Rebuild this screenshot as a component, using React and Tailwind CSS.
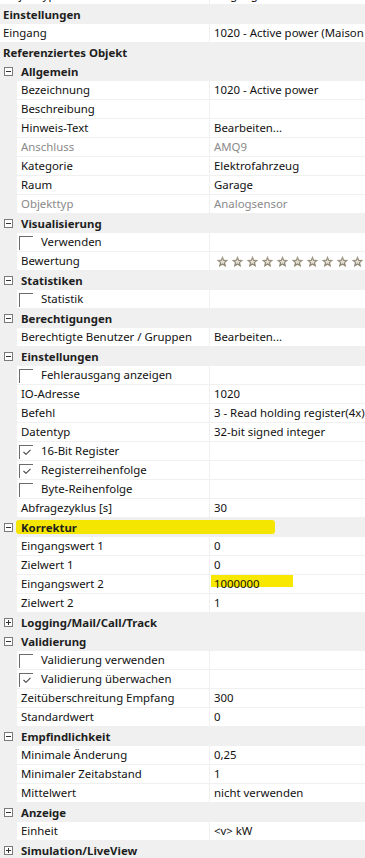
import React from "react";

const H = (label, extra = {}) => ({ kind: "header", label, ...extra });
const G = (label, open = true, extra = {}) => ({ kind: "group", label, open, ...extra });
const R = (label, value = "", extra = {}) => ({ kind: "row", label, value, indent: true, ...extra });
const C = (label, checked = false) => ({ kind: "check", label, checked });

const rows = [
  { kind: "row", label: "Objekttyp", value: "Eingang", indent: false, partial: true },
  H("Einstellungen"),
  { kind: "row", label: "Eingang", value: "1020 - Active power (Maison de l'énergie)", indent: false },
  H("Referenziertes Objekt"),
  G("Allgemein"),
  R("Bezeichnung", "1020 - Active power"),
  R("Beschreibung"),
  R("Hinweis-Text", "Bearbeiten..."),
  R("Anschluss", "AMQ9", { disabled: true }),
  R("Kategorie", "Elektrofahrzeug"),
  R("Raum", "Garage"),
  R("Objekttyp", "Analogsensor", { disabled: true }),
  G("Visualisierung"),
  C("Verwenden"),
  R("Bewertung", "", { stars: true }),
  G("Statistiken"),
  C("Statistik"),
  G("Berechtigungen"),
  R("Berechtigte Benutzer / Gruppen", "Bearbeiten..."),
  G("Einstellungen"),
  C("Fehlerausgang anzeigen"),
  R("IO-Adresse", "1020"),
  R("Befehl", "3 - Read holding register(4x)"),
  R("Datentyp", "32-bit signed integer"),
  C("16-Bit Register", true),
  C("Registerreihenfolge", true),
  C("Byte-Reihenfolge"),
  R("Abfragezyklus [s]", "30"),
  G("Korrektur", true, { mark: true }),
  R("Eingangswert 1", "0"),
  R("Zielwert 1", "0"),
  R("Eingangswert 2", "1000000", { mark: true }),
  R("Zielwert 2", "1"),
  G("Logging/Mail/Call/Track", false),
  G("Validierung"),
  C("Validierung verwenden"),
  C("Validierung überwachen", true),
  R("Zeitüberschreitung Empfang", "300"),
  R("Standardwert", "0"),
  G("Empfindlichkeit"),
  R("Minimale Änderung", "0,25"),
  R("Minimaler Zeitabstand", "1"),
  R("Mittelwert", "nicht verwenden"),
  G("Anzeige"),
  R("Einheit", "<v> kW"),
  G("Simulation/LiveView", false),
];

function Toggle({ open }) {
  return (
    <span className="relative w-[9px] h-[9px] border border-[#7a7a7a] bg-white flex items-center justify-center">
      <span className="w-[5px] h-px bg-[#333]" />
      {!open && <span className="absolute w-px h-[5px] bg-[#333]" />}
    </span>
  );
}

function Star() {
  return (
    <svg width="13" height="13" viewBox="0 0 24 24">
      <defs>
        <linearGradient id="sg" x1="0" y1="0" x2="0" y2="1">
          <stop offset="0" stopColor="#aaa392" />
          <stop offset="1" stopColor="#847b66" />
        </linearGradient>
      </defs>
      <polygon
        points="12,1.5 15,8.8 22.8,9.3 16.8,14.3 18.7,22 12,17.8 5.3,22 7.2,14.3 1.2,9.3 9,8.8"
        fill="url(#sg)"
      />
      <polygon points="12,8 13.6,11.2 17,11.5 14.4,13.7 15.2,17 12,15.2 8.8,17 9.6,13.7 7,11.5 10.4,11.2" fill="#e6e1d6" />
    </svg>
  );
}

function CheckBox({ checked }) {
  return (
    <span className="relative w-[14px] h-[14px] border-t border-l border-[#6b6b6b] mt-[3px] self-start shrink-0">
      {checked && (
        <svg className="absolute left-[3px] top-[3px]" width="8" height="6" viewBox="0 0 8 6">
          <polyline points="0.5,3 3,5.3 7.5,0.8" fill="none" stroke="#444" strokeWidth="1.1" />
        </svg>
      )}
    </span>
  );
}

function Row({ r }) {
  if (r.kind === "header" || r.kind === "group") {
    return (
      <div className="relative flex items-center h-[19px] bg-[#f0f0f0] font-bold text-[#1e1e1e]">
        {r.kind === "group" ? (
          <>
            <span className="w-[17px] flex justify-center">
              <Toggle open={r.open} />
            </span>
            <span className="relative pl-[4px]">
              {r.mark && (
                <span className="absolute left-[-1px] top-[-2px] w-[259px] h-[14px] bg-[#f4e600] rounded-[3px]" />
              )}
              <span className="relative">{r.label}</span>
            </span>
          </>
        ) : (
          <span className="pl-[3px]">{r.label}</span>
        )}
      </div>
    );
  }

  const textColor = r.disabled ? "text-[#8a8a8a]" : "text-[#111]";
  return (
    <div className={`flex h-[19px] border-b border-[#f0f0f0] bg-white ${r.partial ? "-mt-[14px]" : ""}`}>
      {(r.indent || r.kind === "check") && <span className="w-[17px] shrink-0 bg-[#f0f0f0]" />}
      <div
        className={`flex items-center shrink-0 border-r border-[#f0f0f0] ${
          r.indent || r.kind === "check" ? "w-[193px]" : "w-[210px]"
        } ${r.kind === "check" ? "pl-[2px] gap-[8px]" : r.indent ? "pl-[4px]" : "pl-[3px]"} ${textColor}`}
      >
        {r.kind === "check" && <CheckBox checked={r.checked} />}
        <span>{r.label}</span>
      </div>
      <div className={`relative flex items-center flex-1 pl-[4px] ${textColor}`}>
        {r.mark && <span className="absolute left-[1px] top-0 w-[82px] h-[12px] bg-[#f8e800]" />}
        {r.stars ? (
          <div className="flex gap-[2px] pl-[2px]">
            {Array.from({ length: 10 }).map((_, i) => (
              <Star key={i} />
            ))}
          </div>
        ) : (
          <span className="relative">{r.value}</span>
        )}
      </div>
    </div>
  );
}

export default function App() {
  return (
    <div
      className="w-[365px] h-[858px] overflow-hidden bg-white text-[11.4px] leading-none whitespace-nowrap"
      style={{ fontFamily: "'Segoe UI', 'Noto Sans', 'Open Sans', sans-serif" }}
    >
      {rows.map((r, i) => (
        <Row key={i} r={r} />
      ))}
    </div>
  );
}
